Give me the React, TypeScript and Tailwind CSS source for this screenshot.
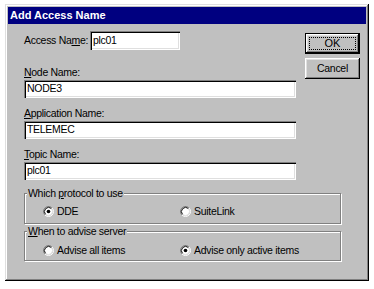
import React from 'react';

const Radio = ({ checked }: { checked?: boolean }) => (
  <svg width="11" height="11" viewBox="0 0 12 12" className="shrink-0">
    <circle cx="6" cy="6" r="4.5" fill="#fff" />
    <path d="M2.11 9.89A5.5 5.5 0 0 1 9.89 2.11" fill="none" stroke="#808080" />
    <path d="M9.89 2.11A5.5 5.5 0 0 1 2.11 9.89" fill="none" stroke="#fff" />
    <path d="M2.82 9.18A4.5 4.5 0 0 1 9.18 2.82" fill="none" stroke="#000" />
    <path d="M9.18 2.82A4.5 4.5 0 0 1 2.82 9.18" fill="none" stroke="#dfdfdf" />
    {checked && <circle cx="6" cy="6" r="2" fill="#000" />}
  </svg>
);

const TextBox = ({ value, className }: { value: string; className: string }) => (
  <div
    className={`${className} h-[18px] bg-white flex items-center pl-[3px] shadow-[inset_1px_1px_#808080,inset_2px_2px_#000,inset_-1px_-1px_#fff,inset_-2px_-2px_#dfdfdf]`}
  >
    {value}
  </div>
);

const Field = ({ label, value }: { label: React.ReactNode; value: string }) => (
  <div className="flex flex-col">
    <div className="h-[13px] leading-[13px]">{label}</div>
    <TextBox value={value} className="w-[272px] mt-[1px]" />
  </div>
);

const Option = ({ label, checked, wide }: { label: string; checked?: boolean; wide?: boolean }) => (
  <div className={`flex items-center gap-[3px] h-[13px] ${wide ? 'w-[137px]' : ''}`}>
    <Radio checked={checked} />
    <span className="leading-[13px]">{label}</span>
  </div>
);

const Group = ({ legend, children, className }: { legend: React.ReactNode; children: React.ReactNode; className: string }) => (
  <fieldset
    className={`${className} w-[317px] border border-[#808080] shadow-[inset_1px_1px_#fff,1px_1px_#fff]`}
  >
    <legend className="ml-[2px] px-[1px] bg-[#c0c0c0] leading-[13px]">{legend}</legend>
    {children}
  </fieldset>
);

export default function App() {
  return (
    <div className="w-[374px] h-[289px] bg-white pt-[4px] pl-[5px] font-['Liberation_Sans',Arial,sans-serif] text-black text-[10.5px] tracking-[-0.3px]">
      <div className="w-[364px] h-[277px] bg-[#c0c0c0] p-[3px] flex flex-col shadow-[inset_-1px_-1px_#000,inset_1px_1px_#dfdfdf,inset_-2px_-2px_#808080,inset_2px_2px_#fff]">
        <div className="h-[17px] bg-[#000080] flex items-center pl-[2px] text-white font-bold text-[11px] tracking-normal">
          Add Access Name
        </div>

        <div className="flex flex-col pl-[16px] pr-[6px] pt-[7px]">
          <div className="flex">
            <div className="w-[272px] flex flex-col">
              <div className="flex items-center h-[19px]">
                <span className="w-[66px]">
                  Access Na<u>m</u>e:
                </span>
                <TextBox value="plc01" className="w-[90px] h-[19px]" />
              </div>
              <div className="mt-[16px] flex flex-col gap-[9px]">
                <Field label={<><u>N</u>ode Name:</>} value="NODE3" />
                <Field label={<><u>A</u>pplication Name:</>} value="TELEMEC" />
                <Field label={<><u>T</u>opic Name:</>} value="plc01" />
              </div>
            </div>

            <div className="ml-auto mt-[2px] flex flex-col gap-[4px]">
              <button className="w-[55px] h-[21px] border border-black bg-[#c0c0c0] p-0 shadow-[inset_-1px_-1px_#000,inset_1px_1px_#fff,inset_-2px_-2px_#808080,inset_2px_2px_#dfdfdf]">
                <div className="m-[3px] h-[13px] border border-dotted border-black flex items-center justify-center leading-none text-[11px] tracking-normal">
                  OK
                </div>
              </button>
              <button className="w-[55px] h-[21px] bg-[#c0c0c0] p-0 flex items-center justify-center shadow-[inset_-1px_-1px_#000,inset_1px_1px_#fff,inset_-2px_-2px_#808080,inset_2px_2px_#dfdfdf]">
                Cancel
              </button>
            </div>
          </div>

          <Group className="mt-[7px] pt-[5px] pb-[5px]" legend={<>Which <u>p</u>rotocol to use</>}>
            <div className="flex pl-[18px]">
              <Option label="DDE" checked wide />
              <Option label="SuiteLink" />
            </div>
          </Group>

          <Group className="mt-[1px] pt-[6px] pb-[3px]" legend={<><u>W</u>hen to advise server</>}>
            <div className="flex pl-[18px]">
              <Option label="Advise all items" wide />
              <Option label="Advise only active items" checked />
            </div>
          </Group>
        </div>
      </div>
    </div>
  );
}
